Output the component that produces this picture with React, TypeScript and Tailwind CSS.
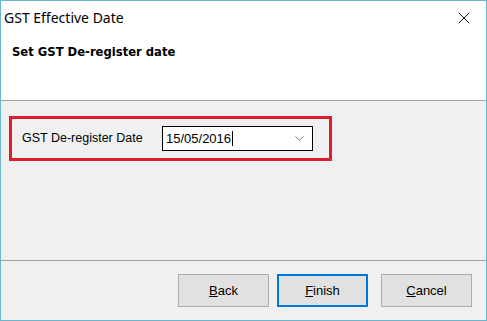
import { ChevronDown, X } from 'lucide-react'

function Btn({ hot, rest, primary }: { hot: string; rest: string; primary?: boolean }) {
  return (
    <button
      className={
        'h-[33px] w-[91px] bg-[#e1e1e1] text-[13px] text-black ' +
        (primary ? 'border-2 border-[#0078d7]' : 'border border-[#adadad]')
      }
    >
      <span className="underline">{hot}</span>
      {rest}
    </button>
  )
}

export default function App() {
  return (
    <div
      className="flex h-[321px] w-[487px] flex-col border border-[#6ab7cd] bg-[#f0f0f0] text-black"
      style={{ fontFamily: '"Liberation Sans", Arial, sans-serif' }}
    >
      {/* Header */}
      <div className="h-[100px] border-b border-[#a0a0a0] bg-white">
        <div className="flex h-[33px] items-center justify-between pl-[3px] pr-[12px]">
          <span className="text-[14px]" style={{ fontFamily: '"Noto Sans", "Open Sans", sans-serif' }}>
            GST Effective Date
          </span>
          <X className="h-[20px] w-[20px]" strokeWidth={1.1} />
        </div>
        <div
          className="pl-[11px] pt-[10px] text-[11.6px] font-bold"
          style={{ fontFamily: '"DejaVu Sans", Verdana, sans-serif' }}
        >
          Set GST De-register date
        </div>
      </div>

      {/* Body */}
      <div className="h-[160px] border-b border-[#a0a0a0] pl-[8px] pt-[15px]">
        <div className="flex h-[45px] w-[323px] items-center border-[3px] border-[#dc1f2a] pl-[10px]">
          <span className="w-[140px] text-[12.5px]">GST De-register Date</span>
          <div className="flex h-[25px] w-[151px] items-center justify-between border border-black bg-white pl-[3px] pr-[5px]">
            <span className="flex items-center text-[13px]">
              15/05/2016
              <span className="ml-[1px] inline-block h-[15px] w-px bg-black" />
            </span>
            <ChevronDown className="h-[15px] w-[15px] text-[#555]" strokeWidth={1.2} />
          </div>
        </div>
      </div>

      {/* Footer */}
      <div className="flex flex-1 items-start pl-[177px] pt-[13px]">
        <Btn hot="B" rest="ack" />
        <div className="ml-[8px]">
          <Btn hot="F" rest="inish" primary />
        </div>
        <div className="ml-[13px]">
          <Btn hot="C" rest="ancel" />
        </div>
      </div>
    </div>
  )
}
